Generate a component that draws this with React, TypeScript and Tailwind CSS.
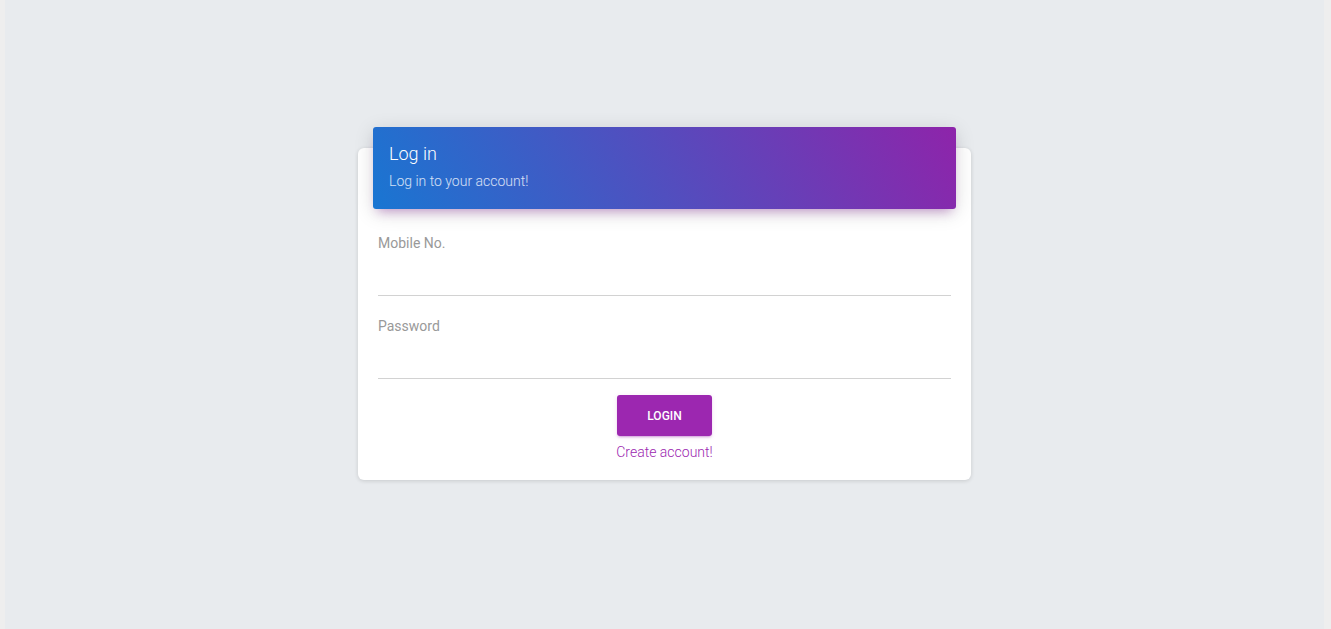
export default function App() {
  return (
    <div className="flex h-[629px] w-full overflow-hidden bg-[#eeeeee]" style={{ fontFamily: 'Roboto, "Liberation Sans", sans-serif' }}>
      <div className="w-[5px] shrink-0 bg-[#eeeeee]" />
      <main className="flex-1 bg-[#e8ebee] pt-[148px]">
        <div className="ml-[353px] w-[613px]">
          <LoginCard />
        </div>
      </main>
      <div className="w-[7px] shrink-0 bg-[#eeeeee]" />
    </div>
  )
}

function LoginCard() {
  return (
    <div className="flow-root rounded-[6px] bg-white px-5 pb-[18px] shadow-[0_1px_4px_0_rgba(0,0,0,0.14)]">
      <div className="-mx-[5px] -mt-[21px] h-[82px] rounded-[3px] bg-[linear-gradient(60deg,#1976d2,#8e24aa)] px-4 pt-[14px] text-white shadow-[0_4px_20px_0_rgba(0,0,0,0.14),0_7px_10px_-5px_rgba(156,39,176,0.4)]">
        <h4 className="text-[18px] leading-[25px] font-light">Log in</h4>
        <p className="mt-[5px] text-[14px] leading-[20px] font-light text-white/80">Log in to your account!</p>
      </div>

      <div className="pt-[24px]">
        <Field label="Mobile No." type="tel" />
        <div className="mt-5">
          <Field label="Password" type="password" />
        </div>

        <div className="mt-4 flex flex-col items-center">
          <button className="h-[41px] w-[95px] rounded-[3px] bg-[#9c27b0] text-[12px] font-medium uppercase text-white shadow-[0_2px_2px_0_rgba(156,39,176,0.14),0_3px_1px_-2px_rgba(156,39,176,0.2),0_1px_5px_0_rgba(156,39,176,0.12)]">
            Login
          </button>
          <a href="#" className="mt-[6px] text-[14px] leading-[20px] font-light text-[#9c27b0]">
            Create account!
          </a>
        </div>
      </div>
    </div>
  )
}

function Field({ label, type }: { label: string; type: string }) {
  return (
    <label className="block">
      <span className="block text-[14px] leading-[20px] font-normal text-[#999999]">{label}</span>
      <input
        type={type}
        className="block h-[43px] w-full border-b border-[#d2d2d2] bg-transparent text-[14px] text-[#555] outline-none"
      />
    </label>
  )
}
